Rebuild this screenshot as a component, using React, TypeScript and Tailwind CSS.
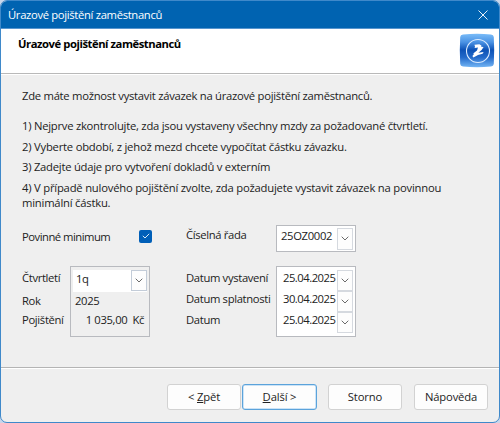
import { ReactNode } from 'react';
import clsx from 'clsx';

const Chevron = ({ className }: { className?: string }) => (
    <svg className={className} width="8" height="5" viewBox="0 0 8 5" fill="none" stroke="#6a6a6a" strokeWidth="1">
        <path d="M0.7 0.7 4 4 7.3 0.7" />
    </svg>
);

const AppLogo = () => (
    <svg width="36" height="35" viewBox="0 0 36 35">
        <defs>
            <linearGradient id="logoFill" x1="0" y1="0" x2="0" y2="1">
                <stop offset="0" stopColor="#7abcf8" />
                <stop offset="0.25" stopColor="#4a92e4" />
                <stop offset="0.48" stopColor="#0d52b6" />
                <stop offset="0.7" stopColor="#2269c9" />
                <stop offset="1" stopColor="#74b6f5" />
            </linearGradient>
        </defs>
        <path d="M4 1.6Q18 0 32 1.6Q34.6 1.8 34.8 4Q35.6 17 34.8 31Q34.6 33.4 32 33.6Q18 35 4 33.6Q1.4 33.4 1.2 31Q0.4 17 1.2 4Q1.4 1.8 4 1.6Z" fill="url(#logoFill)" />
        <circle cx="19" cy="18" r="11.5" fill="none" stroke="#dcecff" strokeWidth="1.1" />
        <path
            d="M15.4 11.8 20.4 11.2 22.4 12.6 22.2 13.8 24.6 14 22.6 17 19.4 19.8 24.6 19 23.6 20.8 19 22 14.4 24.4 13.4 23 15 21 14.2 20.6 18 17.4 19 14.6 15.6 15 16 13.4Z"
            fill="#fff"
        />
    </svg>
);

interface WizardButtonProps {
    children: ReactNode;
    primary?: boolean;
    className?: string;
}

function WizardButton({ children, primary, className }: WizardButtonProps) {
    return (
        <button
            className={clsx(
                'h-[26px] rounded-[3px] border bg-[#fdfdfd] text-center leading-[24px] tracking-[-0.15px] whitespace-nowrap',
                primary ? 'w-[75px] border-[#5ba3db] shadow-[inset_0_0_0_0.5px_#9ccaf0]' : 'w-[74px] border-[#d2d2d2]',
                className,
            )}
        >
            {children}
        </button>
    );
}

const dates = [
    { label: 'Datum vystavení', value: '25.04.2025' },
    { label: 'Datum splatnosti', value: '30.04.2025' },
    { label: 'Datum', value: '25.04.2025' },
];

export default function App() {
    return (
        <div className="h-[423px] w-[500px] bg-[#c9d6ea] font-['Open_Sans',sans-serif] text-[11.25px] leading-4 tracking-[-0.25px] text-[#222]">
            <div className="flex h-[423px] w-[500px] flex-col overflow-hidden rounded-[7px] border border-[#3f89ca] bg-[#efefef]">
                {/* Title bar */}
                <div className="flex h-[27px] shrink-0 items-center justify-between bg-[#0063b1] pr-[11px] pl-[7px] text-white">
                    <span className="tracking-[-0.33px] whitespace-nowrap">Úrazové pojištění zaměstnanců</span>
                    <svg width="10" height="10" viewBox="0 0 10 10" stroke="#e6f0f9" strokeWidth="1">
                        <path d="M0.5 0.5 9.5 9.5M9.5 0.5 0.5 9.5" />
                    </svg>
                </div>

                {/* Page header */}
                <div className="flex h-[46px] shrink-0 justify-between border-t border-b border-t-[#5795ce] border-b-[#b9b9b9] bg-white pr-1 pl-[17px]">
                    <h1 className="mt-[7px] font-bold tracking-[-0.45px] whitespace-nowrap text-black">Úrazové pojištění zaměstnanců</h1>
                    <div className="mt-1">
                        <AppLogo />
                    </div>
                </div>

                {/* Page body */}
                <div className="flex h-[293px] shrink-0 flex-col border-t border-white pl-[21px]">
                    <p className="mt-[13px] tracking-[-0.27px] whitespace-nowrap">Zde máte možnost vystavit závazek na úrazové pojištění zaměstnanců.</p>
                    <ol className="mt-[14px] space-y-[4.5px] whitespace-nowrap">
                        <li>1) Nejprve zkontrolujte, zda jsou vystaveny všechny mzdy za požadované čtvrtletí.</li>
                        <li className="tracking-[-0.22px]">2) Vyberte období, z jehož mezd chcete vypočítat částku závazku.</li>
                        <li>3) Zadejte údaje pro vytvoření dokladů v externím</li>
                        <li className="leading-[15px] tracking-[-0.21px]">
                            4) V případě nulového pojištění zvolte, zda požadujete vystavit závazek na povinnou
                            <br />
                            minimální částku.
                        </li>
                    </ol>

                    <div className="mt-[15px] flex h-[27px] tracking-[-0.34px] whitespace-nowrap">
                        <span className="mt-[4px] w-[117px] tracking-[-0.5px]">Povinné minimum</span>
                        <span className="mt-[5px] flex h-[13px] w-[13px] items-center justify-center rounded-[2px] bg-[#005fb8]">
                            <svg width="8" height="6" viewBox="0 0 8 6" fill="none" stroke="#d9e9f7" strokeWidth="1">
                                <path d="M0.8 2.8 3 5 7.2 0.8" />
                            </svg>
                        </span>
                        <span className="mt-[2px] ml-[34px] w-[90px]">Číselná řada</span>
                        <div className="flex h-[27px] w-[80px] border border-[#b8babf] bg-white">
                            <span className="mt-[2px] ml-1 w-[56px]">25OZ0002</span>
                            <span className="mt-[2px] flex h-[22px] w-[16px] items-center justify-center border border-[#d5d9df] bg-[#fdfdfd]">
                                <Chevron />
                            </span>
                        </div>
                    </div>

                    <div className="mt-[14px] flex h-[71px] tracking-[-0.34px] whitespace-nowrap">
                        <div className="w-[48px]">
                            <p className="mt-1">Čtvrtletí</p>
                            <p className="mt-[7px]">Rok</p>
                            <p className="mt-[3px]">Pojištění</p>
                        </div>
                        <div className="h-[71px] w-[80px] border border-[#b8babf] pt-[3px] pr-[2px] pl-[2px]">
                            <div className="flex h-[22px] bg-white">
                                <span className="mt-[1px] w-[58px] pl-[3px]">1q</span>
                                <span className="flex h-[21px] w-[16px] items-center justify-center border border-[#c3ccd8] bg-[#fdfdfd]">
                                    <Chevron />
                                </span>
                            </div>
                            <p className="mt-px pl-[2px]">2025</p>
                            <p className="mt-[3px] flex justify-end gap-[5px] pr-[3px]">
                                <span>1 035,00</span>
                                <span>Kč</span>
                            </p>
                        </div>

                        <div className="ml-[36px] w-[90px]">
                            {dates.map(({ label }) => (
                                <p key={label} className="mt-[4px] mb-[5px] h-4">
                                    {label}
                                </p>
                            ))}
                        </div>
                        <div className="h-[71px] w-[80px] border border-[#b8babf] bg-white pt-[3px]">
                            {dates.map(({ label, value }) => (
                                <div key={label} className="flex h-[21.3px]">
                                    <span className="w-[60px] pl-[6px] tracking-[-0.5px]">{value}</span>
                                    <span className="flex w-[16px] items-center justify-center border border-[#d5d9df] bg-[#fdfdfd]">
                                        <Chevron />
                                    </span>
                                </div>
                            ))}
                        </div>
                    </div>
                </div>

                {/* Wizard navigation */}
                <div className="flex grow border-t border-[#b4b4b4] pl-[166px] shadow-[inset_0_1px_0_#fff]">
                    <WizardButton className="mt-4">
                        &lt; <u>Z</u>pět
                    </WizardButton>
                    <WizardButton className="mt-4 ml-px" primary>
                        <u>D</u>alší &gt;
                    </WizardButton>
                    <WizardButton className="mt-4 ml-[11px]">Storno</WizardButton>
                    <WizardButton className="mt-4 ml-[12px]">Nápověda</WizardButton>
                </div>
            </div>
        </div>
    );
}
